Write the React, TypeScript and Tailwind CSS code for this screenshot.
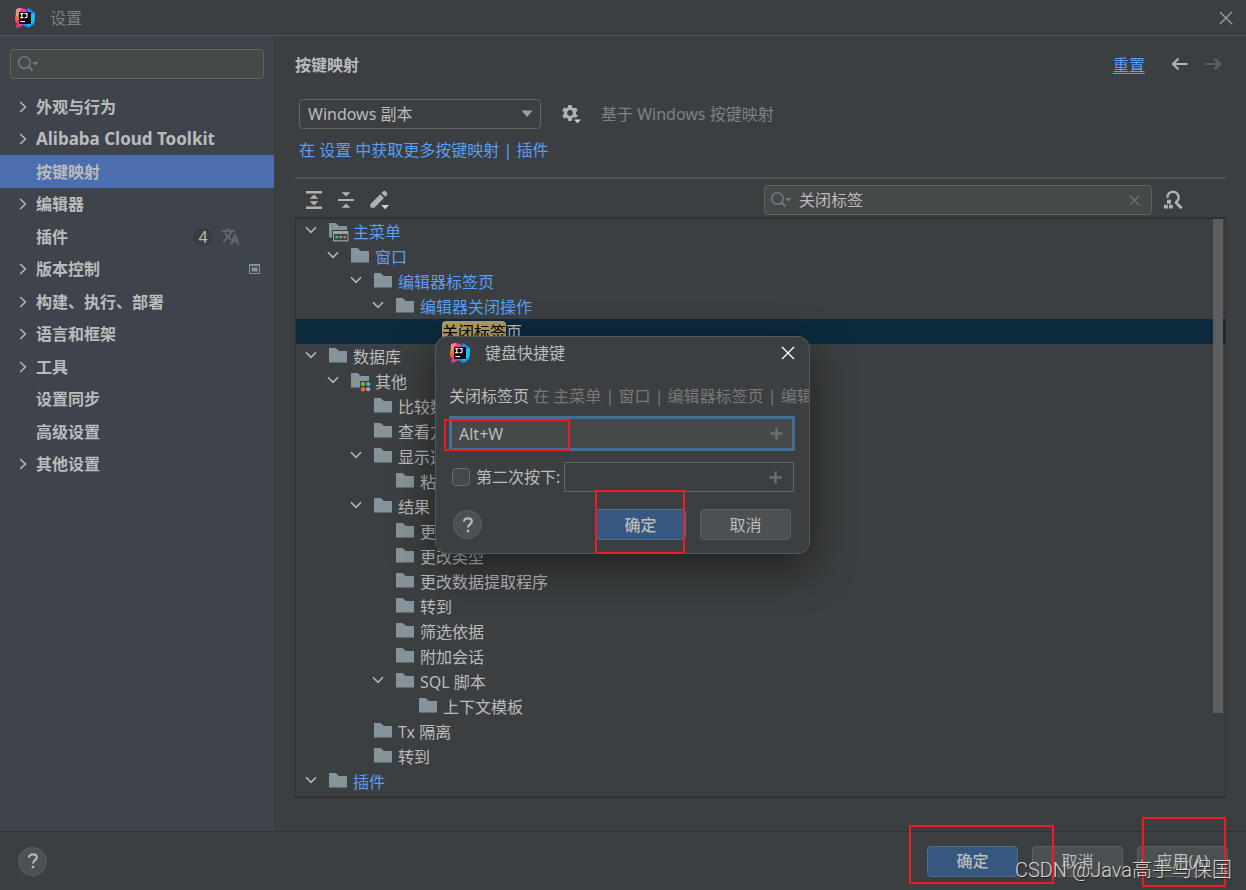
import React from 'react';

type IconProps = { className?: string };

function Logo({ className = '' }: IconProps) {
  return (
    <svg className={className} width="20" height="20" viewBox="0 0 20 20" aria-hidden="true">
      <path d="M1 1.5 L4.5 0 L9 3 L9 10 L0.5 11 Z" fill="#f9a84a" />
      <path d="M1.5 1 L6 0 L8 3 L5 8 L1 5.5 Z" fill="#f98a86" />
      <path d="M0 9 L5 6 L8 14 L7 18 L0.5 14 Z" fill="#fb6a2c" />
      <path d="M6 0 L11.5 1.5 L9 6 L4 7 Z" fill="#f53aa5" />
      <path d="M1 19.5 L2.5 12 L10 15 L7 18 L3 19.8 Z" fill="#f0308e" />
      <path d="M11 3.5 L13.5 0 L20 5 L19 16.5 L13.5 20 L8 17 L9 12 L12 5 Z" fill="#0a94f7" />
      <path d="M16 6.5 L20 5 L19.4 14 L14 18 L12 16 Z" fill="#14c4f5" />
      <rect x="4" y="4" width="12" height="12" fill="#12060c" />
      <path d="M5.2 5.6 h3.2 M6.8 5.6 v4 M5.2 9.6 h3.2 M9.6 5.6 h2.4 v3 q0 1 -1.1 1 h-1.3" fill="none" stroke="#fff" strokeWidth="1.1" />
      <rect x="5.4" y="13" width="4.6" height="1.1" fill="#fff" />
    </svg>
  );
}

function Close({ className = '' }: IconProps) {
  return (
    <svg className={className} width="14" height="14" viewBox="0 0 14 14" fill="none" stroke="currentColor" strokeWidth="1.3" aria-hidden="true">
      <path d="M1 1 L13 13 M13 1 L1 13" />
    </svg>
  );
}

function SearchIcon() {
  return (
    <svg width="22" height="18" viewBox="0 0 22 18" aria-hidden="true" className="shrink-0 text-[#6f7a80]">
      <circle cx="7.5" cy="7.5" r="5.8" fill="none" stroke="currentColor" strokeWidth="1.5" />
      <path d="M11.5 11.5 L15.5 15.5" stroke="currentColor" strokeWidth="2" />
      <path d="M15 7 h6.4 l-3.2 3.6 z" fill="currentColor" />
    </svg>
  );
}

function Chevron({ open }: { open: boolean }) {
  return (
    <svg width="12" height="12" viewBox="0 0 12 12" fill="none" stroke="#b2b5b7" strokeWidth="1.6" aria-hidden="true" className="shrink-0">
      <path d={open ? 'M1 3.2 L6 8.4 L11 3.2' : 'M3.2 1 L8.4 6 L3.2 11'} />
    </svg>
  );
}

function Folder({ kind }: { kind?: 'menu' | 'group' }) {
  return (
    <svg width="20" height="20" viewBox="0 0 20 20" aria-hidden="true" className="shrink-0">
      <path d="M0 1 h6.5 l3.5 3 h8 v11.5 h-18 z" fill="#87939a" />
      {kind === 'menu' && (
        <>
          <rect x="3" y="8" width="17" height="12" fill="#3c3f41" />
          <rect x="4" y="9" width="15.4" height="10.4" fill="#9aa7b0" />
          <rect x="5" y="12" width="13.4" height="6.2" fill="#3c3f41" />
          <rect x="6.4" y="13.8" width="2.6" height="2.6" fill="#62b543" />
          <rect x="10.4" y="13.8" width="2.6" height="2.6" fill="#40b6e0" />
          <rect x="14.4" y="13.8" width="2.6" height="2.6" fill="#f26522" />
        </>
      )}
      {kind === 'group' && (
        <>
          <path d="M9 9 h11 v11 h-11 z" fill="#3c3f41" />
          <circle cx="12" cy="12" r="2.2" fill="#62b543" />
          <circle cx="17.2" cy="12" r="2.1" fill="#40b6e0" />
          <circle cx="12" cy="17.2" r="2.2" fill="#f26522" />
          <circle cx="17.2" cy="17.2" r="2.1" fill="#9aa7b0" />
        </>
      )}
    </svg>
  );
}

const sidebar = [
  { label: '外观与行为', arrow: true },
  { label: 'Alibaba Cloud Toolkit', arrow: true, latin: true },
  { label: '按键映射', selected: true },
  { label: '编辑器', arrow: true },
  { label: '插件', badge: true },
  { label: '版本控制', arrow: true, project: true },
  { label: '构建、执行、部署', arrow: true },
  { label: '语言和框架', arrow: true },
  { label: '工具', arrow: true },
  { label: '设置同步' },
  { label: '高级设置' },
  { label: '其他设置', arrow: true },
];

type Node = { label: string; level: number; open?: boolean; blue?: boolean; kind?: 'menu' | 'group'; selected?: boolean };

const tree: Node[] = [
  { label: '主菜单', level: 0, open: true, blue: true, kind: 'menu' },
  { label: '窗口', level: 1, open: true, blue: true },
  { label: '编辑器标签页', level: 2, open: true, blue: true },
  { label: '编辑器关闭操作', level: 3, open: true, blue: true },
  { label: '关闭标签页', level: 4, selected: true },
  { label: '数据库', level: 0, open: true },
  { label: '其他', level: 1, open: true, kind: 'group' },
  { label: '比较数据', level: 2 },
  { label: '查看方式', level: 2 },
  { label: '显示选项', level: 2, open: true },
  { label: '粘贴', level: 3 },
  { label: '结果', level: 2, open: true },
  { label: '更改', level: 3 },
  { label: '更改类型', level: 3 },
  { label: '更改数据提取程序', level: 3 },
  { label: '转到', level: 3 },
  { label: '筛选依据', level: 3 },
  { label: '附加会话', level: 3 },
  { label: 'SQL 脚本', level: 3, open: true },
  { label: '上下文模板', level: 4 },
  { label: 'Tx 隔离', level: 2 },
  { label: '转到', level: 2 },
  { label: '插件', level: 0, open: true, blue: true },
];

const indent = ['pl-2', 'pl-[30px]', 'pl-[53px]', 'pl-[75px]', 'pl-[98px]'];

function Button({ children, primary, className = '' }: { children: React.ReactNode; primary?: boolean; className?: string }) {
  return (
    <button
      className={`relative flex h-[31px] w-[91px] shrink-0 items-center justify-center rounded border ${
        primary ? 'border-[#4c708c] bg-[#365880] font-medium' : 'border-[#5e6060] bg-[#4c5052]'
      } ${className}`}
    >
      {children}
    </button>
  );
}

function Help() {
  return (
    <button aria-label="帮助" className="flex size-[29px] items-center justify-center rounded-full border border-[#5e6060] bg-[#4c5052] text-[#b4b7b9]">
      <svg width="12" height="16" viewBox="0 0 12 16" aria-hidden="true" fill="none" stroke="currentColor" strokeWidth="2.2">
        <path d="M2 4.8 C2 2.4 3.6 1.4 5.9 1.4 C8.3 1.4 9.8 2.7 9.8 4.6 C9.8 7.2 6 7.2 6 10.6" />
        <path d="M6 12.8 V15.2" strokeWidth="2.5" />
      </svg>
    </button>
  );
}

function Mark({ className }: { className: string }) {
  return <span aria-hidden="true" className={`pointer-events-none absolute z-10 border-2 border-[#ed1c24] ${className}`} />;
}

function Plus() {
  return (
    <svg width="13" height="13" viewBox="0 0 13 13" aria-hidden="true" className="pointer-events-none absolute right-3 text-[#6b6f71]">
      <path d="M6.5 0.5 V12.5 M0.5 6.5 H12.5" stroke="currentColor" strokeWidth="2.4" />
    </svg>
  );
}

function Dialog() {
  return (
    <div className="pointer-events-none absolute inset-0 z-20 flex items-center justify-center pr-px">
      <section
        role="dialog"
        aria-label="键盘快捷键"
        className="pointer-events-auto flex h-[218px] w-[375px] flex-col rounded-xl border border-[#55585a] bg-[#3c3f41] shadow-[0_14px_40px_rgba(0,0,0,0.5)]"
      >
        <header className="flex h-8 shrink-0 items-center pl-3.5 pr-3.5">
          <Logo />
          <h2 className="ml-[15px] flex-1">键盘快捷键</h2>
          <button aria-label="关闭" className="text-white">
            <Close />
          </button>
        </header>
        <p className="mt-[15px] h-6 overflow-hidden whitespace-nowrap pl-[13px] leading-6 text-[#787878]">
          <span className="text-[#bbbbbb]">关闭标签页</span> 在 主菜单 | 窗口 | 编辑器标签页 | 编辑器关闭操作
        </p>
        <div className="relative ml-[13px] mr-3.5 mt-2 flex h-[35px] shrink-0 items-center">
          <input
            aria-label="快捷键"
            defaultValue="Alt+W"
            className="h-[35px] w-full border-[3px] border-[#466d94] bg-[#45494a] pl-[7px] outline-none"
          />
          <Plus />
          <Mark className="-left-[5px] top-[3px] h-8 w-[126px]" />
        </div>
        <div className="ml-4 mr-[15px] mt-[11px] flex items-center">
          <input id="second" type="checkbox" className="size-[18px] shrink-0 appearance-none rounded-sm border border-[#6b6b6b] bg-[#43494a]" />
          <label htmlFor="second" className="ml-1.5 mr-1 whitespace-nowrap">
            第二次按下:
          </label>
          <div className="relative flex min-w-0 flex-1 items-center">
            <input aria-label="第二次按下的快捷键" className="h-[30px] w-full border border-[#646464] bg-transparent px-2 outline-none" />
            <Plus />
          </div>
        </div>
        <div className="ml-[17px] mr-[18px] mt-[17px] flex items-center gap-3.5">
          <Help />
          <span className="flex-1" />
          <Button primary>
            确定
            <Mark className="-left-px -top-5 h-16 w-[90px]" />
          </Button>
          <Button>取消</Button>
        </div>
      </section>
    </div>
  );
}

export default function App() {
  return (
    <div className="relative flex min-h-screen flex-col overflow-hidden bg-[#3c3f41] font-['Noto_Sans','Noto_Sans_CJK_SC',sans-serif] text-base leading-6 text-[#bbbbbb]">
      <header className="flex h-9 items-center border-b border-[#505355] pl-[15px] pr-[13px] text-[#7b7e80]">
        <Logo />
        <h1 className="ml-[15px] flex-1 pt-px">设置</h1>
        <button aria-label="关闭窗口" className="text-[#9a9c9d]">
          <Close />
        </button>
      </header>

      <div className="flex flex-1">
        <aside className="w-[274px] shrink-0 bg-[#3e434c]">
          <label className="mx-2.5 mt-[13px] flex h-[30px] items-center rounded border border-[#646464] bg-[#45494a] pl-1.5">
            <SearchIcon />
            <input aria-label="搜索设置" className="min-w-0 flex-1 bg-transparent outline-none" />
          </label>
          <nav className="mt-[11px] grid min-h-[390px] auto-rows-fr font-bold">
            {sidebar.map((item) => (
              <a key={item.label} href="#" className={`flex items-center pl-[17px] pr-3 pt-px ${item.selected ? 'bg-[#4b6eaf]' : ''}`}>
                <span className="flex w-[19px] shrink-0">{item.arrow && <Chevron open={false} />}</span>
                <span className={item.latin ? 'flex-1 text-[17px]' : 'flex-1'}>{item.label}</span>
                {item.badge && (
                  <span className="mr-[22px] flex items-center gap-2 font-normal">
                    <span className="flex h-[18px] w-5 items-center justify-center rounded-full bg-[#3a3d3f]">4</span>
                    <svg width="19" height="19" viewBox="0 0 24 24" fill="#656a72" aria-hidden="true">
                      <path d="M12.87 15.07l-2.54-2.51.03-.03A17.52 17.52 0 0 0 14.07 6H17V4h-7V2H8v2H1v2h11.17C11.5 7.92 10.44 9.75 9 11.35 8.07 10.32 7.3 9.19 6.69 8h-2c.73 1.63 1.73 3.17 2.98 4.56l-5.09 5.02L4 19l5-5 3.11 3.11.76-2.04zM18.5 10h-2L12 22h2l1.12-3h4.75L21 22h2l-4.5-12zm-2.62 7l1.62-4.33L19.12 17h-3.24z" stroke="#656a72" strokeWidth="0.7" />
                    </svg>
                  </span>
                )}
                {item.project && (
                  <svg width="12" height="10" viewBox="0 0 12 10" aria-hidden="true" className="mr-px">
                    <path d="M0.5 0.5 h10 v9 h-10 z" fill="none" stroke="#87939a" />
                    <rect x="0" y="0" width="11" height="2" fill="#87939a" />
                    <rect x="2.6" y="3.5" width="6" height="4" fill="#87939a" />
                  </svg>
                )}
              </a>
            ))}
          </nav>
        </aside>

        <main className="flex min-w-0 flex-1 flex-col pl-[21px] pr-5">
          <div className="mt-[17px] flex items-center">
            <h2 className="flex-1 font-bold">按键映射</h2>
            <a href="#" className="mr-[26px] text-[#589df6] underline underline-offset-2">
              重置
            </a>
            <button aria-label="后退" className="mr-[17px] text-[#afb1b3]">
              <svg width="17" height="14" viewBox="0 0 17 14" fill="none" stroke="currentColor" strokeWidth="2.2" aria-hidden="true">
                <path d="M16.5 6 H2 M7.5 0.5 L2 6 L7.5 11.5" />
              </svg>
            </button>
            <button aria-label="前进" className="mr-1 text-[#5d6062]">
              <svg width="17" height="14" viewBox="0 0 17 14" fill="none" stroke="currentColor" strokeWidth="2.2" aria-hidden="true">
                <path d="M0.5 6 H15 M9.5 0.5 L15 6 L9.5 11.5" />
              </svg>
            </button>
          </div>

          <div className="ml-1 mt-[22px] flex items-center">
            <div className="relative flex items-center">
              <select aria-label="按键映射方案" className="h-[30px] w-[242px] appearance-none rounded-sm border border-[#646464] bg-[#3c3f41] pl-2 outline-none">
                <option>Windows 副本</option>
              </select>
              <svg width="12" height="8" viewBox="0 0 12 8" aria-hidden="true" className="pointer-events-none absolute right-2">
                <path d="M0.5 0.5 h11 l-5.5 6.5 z" fill="#9a9da0" />
              </svg>
            </div>
            <button aria-label="方案操作" className="ml-5">
              <svg width="22" height="22" viewBox="0 0 22 22" aria-hidden="true">
                <path
                  fillRule="evenodd"
                  fill="#afb1b3"
                  d="M7.3 2 h3.4 l.5 2.3 1.6.9 2.2-.8 1.7 3 -1.7 1.6 v1.9 l1.7 1.6 -1.7 3 -2.2-.8 -1.6.9 -.5 2.3 h-3.4 l-.5-2.3 -1.6-.9 -2.2.8 -1.7-3 1.7-1.6 v-1.9 l-1.7-1.6 1.7-3 2.2.8 1.6-.9z M9 7.1 a2.9 2.9 0 1 0 .01 0z"
                />
                <path d="M11.5 14.5 h10 l-5 6 z" fill="#3c3f41" />
                <path d="M13 16.5 h7 l-3.5 3.8 z" fill="#d0d2d3" />
              </svg>
            </button>
            <span className="ml-[18px] text-[#808080]">基于 Windows 按键映射</span>
          </div>
          <p className="ml-1 mt-[9px] text-[#589df6]">
            <a href="#">在 设置 中获取更多按键映射</a> | <a href="#">插件</a>
          </p>

          <div className="mt-[15px] flex h-10 shrink-0 items-center border-t-2 border-[#515151] pl-2.5 pt-1">
            <button aria-label="全部展开" className="mr-[15px]">
              <svg width="18" height="20" viewBox="0 0 18 20" fill="#afb1b3" aria-hidden="true">
                <path d="M1 1 h16 v2.4 h-16z M1 16.6 h16 v2.4 h-16z M9 4.6 l4.4 4.2 h-8.8z M9 15.4 l-4.4-4.2 h8.8z" />
              </svg>
            </button>
            <button aria-label="全部折叠" className="mr-4">
              <svg width="16" height="18" viewBox="0 0 16 18" fill="#afb1b3" aria-hidden="true">
                <path d="M0 7.9 h16 v2.2 h-16z M3.6 1.2 h8.8 L8 5.6z M3.6 16.8 h8.8 L8 12.4z" />
              </svg>
            </button>
            <button aria-label="编辑快捷键">
              <svg width="20" height="20" viewBox="0 0 20 20" fill="#afb1b3" aria-hidden="true">
                <path d="M0.5 14 L10.2 4.2 L14 8 L4.3 17.8 H0.5z M11.4 3 L13.2 1.2 Q14.4 .3 15.4 1.2 L17 2.8 Q18 4 17 5 L15.2 6.8z" />
                <path d="M11.2 15 h7.8 l-3.9 4.2z" fill="#d0d2d3" />
              </svg>
            </button>
            <span className="flex-1" />
            <label className="flex h-[30px] w-[388px] items-center rounded border border-[#646464] bg-[#45494a] pl-[5px] pr-[11px]">
              <SearchIcon />
              <input aria-label="搜索操作" defaultValue="关闭标签" className="ml-[7px] min-w-0 flex-1 bg-transparent outline-none" />
              <svg width="11" height="11" viewBox="0 0 11 11" stroke="#6e7375" strokeWidth="1.3" aria-hidden="true">
                <path d="M1 1 L10 10 M10 1 L1 10" />
              </svg>
            </label>
            <button aria-label="按快捷键查找" className="ml-[11px] mr-[43px]">
              <svg width="20" height="20" viewBox="0 0 20 20" fill="none" aria-hidden="true">
                <path d="M4.4 7.6 A5.6 5.6 0 1 1 12.5 12.4" stroke="#afb1b3" strokeWidth="2.5" />
                <path d="M12.4 12 L18.6 18.2" stroke="#afb1b3" strokeWidth="3" />
                <path d="M4 9.8 h4v4h-4z M1 14.8 h3.8v3.8h-3.8z M6 14.8 h3.8v3.8h-3.8z" fill="#afb1b3" />
              </svg>
            </button>
          </div>

          <div className="relative border-x border-y-2 border-[#323232] pb-0.5">
            <ul role="tree">
              {tree.map((node, i) => (
                <li key={i} role="treeitem" aria-selected={!!node.selected} className={`flex h-[25px] items-center ${indent[node.level]} ${node.selected ? 'bg-[#0d293e]' : ''}`}>
                  <span className="flex w-[25px] shrink-0 pb-1 pl-px">{node.open && <Chevron open />}</span>
                  {node.selected ? (
                    <span className="ml-[23px] whitespace-nowrap">
                      <mark className="rounded-sm bg-[#b09f5f] text-black">关闭标签</mark>页
                    </span>
                  ) : (
                    <>
                      <Folder kind={node.kind} />
                      <span className={`ml-1 whitespace-nowrap pt-px ${node.blue ? 'text-[#589df6]' : ''}`}>{node.label}</span>
                    </>
                  )}
                </li>
              ))}
            </ul>
            <span aria-hidden="true" className="absolute right-0.5 top-0 h-[494px] w-2.5 bg-[#5c5e5f]" />
          </div>
        </main>
      </div>

      <footer className="flex h-[59px] shrink-0 items-center gap-3.5 border-t border-[#323232] pl-[18px] pr-[18px]">
        <Help />
        <span className="flex-1" />
        <Button primary>
          确定
          <Mark className="-left-[19px] -top-[22px] h-[59px] w-[145px]" />
        </Button>
        <Button>取消</Button>
        <Button>
          应用(A)
          <Mark className="left-1 -top-[30px] h-[70px] w-[84px]" />
        </Button>
      </footer>

      <p className="pointer-events-none absolute bottom-1.5 right-3.5 z-30 whitespace-nowrap font-[Roboto,'Noto_Sans_CJK_SC',sans-serif] text-xl leading-7 font-light text-[#d6d6d6] [text-shadow:1px_1px_1px_rgba(0,0,0,0.6)]">
        CSDN @Java高手马保国
      </p>
      <Dialog />
    </div>
  );
}
